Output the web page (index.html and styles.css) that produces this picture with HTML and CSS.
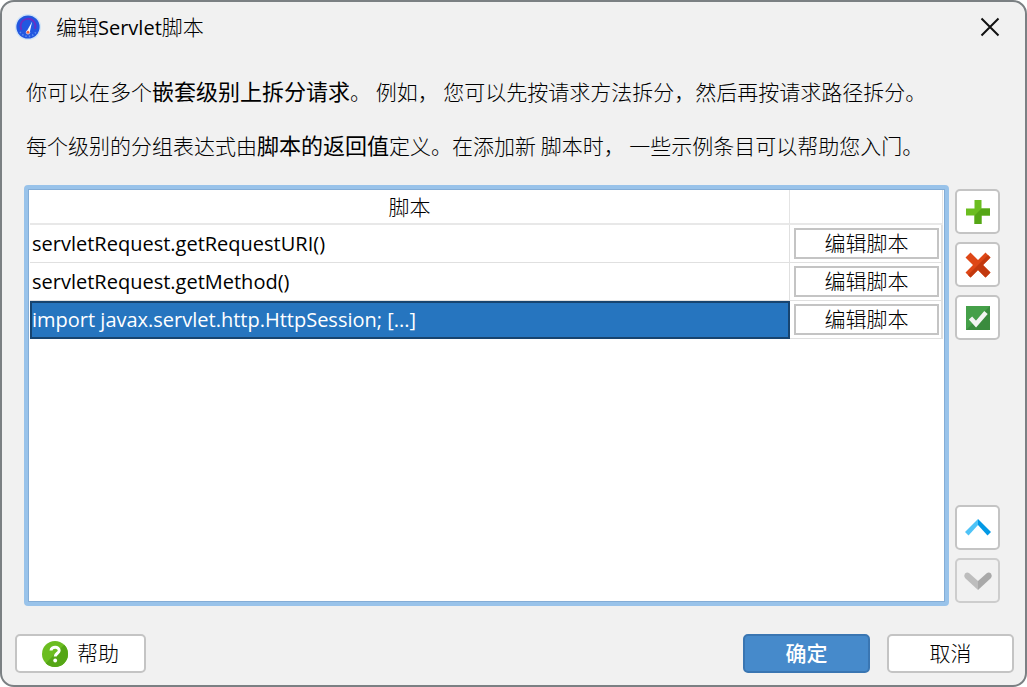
FILE: index.html
```html
<!DOCTYPE html>
<html lang="zh-CN">
<head>
  <meta charset="UTF-8">
  <title>编辑Servlet脚本</title>
  <meta name="viewport" content="width=device-width, initial-scale=1.0">
  <link rel="stylesheet" href="styles.css">
</head>
<body>

  <div class="dialog">
    <header class="titlebar">
      <svg class="app-icon" viewBox="0 0 26 26" aria-hidden="true">
        <circle cx="13" cy="13" r="13" fill="#cfe3f7"/>
        <circle cx="13" cy="13" r="11.6" fill="#2257e0"/>
        <path d="M6.5 16a7.5 7.5 0 1 1 13.5-1" fill="none" stroke="#6a2fc4" stroke-width="1.8"/>
        <path d="M5 18a9.5 9.5 0 0 0 16 0" fill="none" stroke="#5b8df0" stroke-width="1.6" stroke-dasharray="1.4 2"/>
        <path d="M17.2 7.5l-2.6 11.2-3-1.2z" fill="#f4f7ff"/>
        <circle cx="13" cy="18.3" r="1.8" fill="#f2603c" stroke="#fff" stroke-width=".6"/>
      </svg>
      <h1>编辑<span class="latin">Servlet</span>脚本</h1>
      <button class="close-btn" aria-label="关闭">
        <svg viewBox="0 0 20 20"><path d="M1.5 1.5l17 17M18.5 1.5l-17 17" fill="none" stroke="#111" stroke-width="2"/></svg>
      </button>
    </header>

    <div class="intro">
      <p>你可以在多个<b>嵌套级别上拆分请求</b>。 例如， 您可以先按请求方法拆分，然后再按请求路径拆分。</p>
      <p>每个级别的分组表达式由<b>脚本的返回值</b>定义。在添加新 脚本时， 一些示例条目可以帮助您入门。</p>
    </div>

    <main class="content">
      <div class="table-box">
        <table>
          <thead>
            <tr>
              <th>脚本</th>
              <th class="action"></th>
            </tr>
          </thead>
          <tbody>
            <tr>
              <td>servletRequest.getRequestURI()</td>
              <td class="action"><button class="edit-btn">编辑脚本</button></td>
            </tr>
            <tr>
              <td>servletRequest.getMethod()</td>
              <td class="action"><button class="edit-btn">编辑脚本</button></td>
            </tr>
            <tr class="selected">
              <td>import javax.servlet.http.HttpSession; [...]</td>
              <td class="action"><button class="edit-btn">编辑脚本</button></td>
            </tr>
          </tbody>
        </table>
      </div>

      <div class="side">
        <button class="icon-btn" aria-label="添加">
          <svg viewBox="0 0 28 28">
            <path d="M10.5 2h7v8.500h8.500v7h-8.500V26h-7v-8.500H2v-7h8.500z" fill="#6bbd20"/>
            <path d="M26 10.500v7h-8.500V26h-7v-8.500l7-7z" fill="#55a616"/>
          </svg>
        </button>
        <button class="icon-btn" aria-label="删除">
          <svg viewBox="0 0 28 28">
            <path d="M6.500 1.500L14 9l7.500-7.500 5 5L19 14l7.500 7.500-5 5L14 19l-7.500 7.500-5-5L9 14 1.500 6.500z" fill="#de4716"/>
            <path d="M26.500 6.500L19 14l7.500 7.500-5 5L14 19l-7.500 7.500-2.500-2.500L24 4z" fill="#c2390f"/>
          </svg>
        </button>
        <button class="icon-btn" aria-label="检查">
          <svg viewBox="0 0 28 28">
            <path d="M2 2h24v24H2z" fill="#45a049"/>
            <path d="M26 2v24H2z" fill="#3a8b3e"/>
            <path d="M6.500 14l5.500 6L22 8.500" fill="none" stroke="#f2f4f2" stroke-width="4.500"/>
          </svg>
        </button>
        <button class="icon-btn move-up" aria-label="上移">
          <svg viewBox="0 0 28 28">
            <path d="M14 5v6L4.500 21.500 1 18z" fill="#4fc3f7"/>
            <path d="M14 5v6l9.500 10.500L27 18z" fill="#0399e5"/>
          </svg>
        </button>
        <button class="icon-btn" aria-label="下移" disabled>
          <svg viewBox="0 0 28 28">
            <path d="M14 23v-9L5 6Q3 5 1 6.500-.5 9 1 11z" fill="#bdbdbd"/>
            <path d="M14 23v-9l9-8q2-1 4 .5 1.500 2.500 0 4.500z" fill="#a9a9a9"/>
          </svg>
        </button>
      </div>
    </main>

    <footer class="footer">
      <button class="btn help">
        <svg viewBox="0 0 26 26" aria-hidden="true">
          <circle cx="13" cy="13" r="13" fill="#6bbd20"/>
          <path d="M22.200 3.800A13 13 0 0 1 3.800 22.200z" fill="#55a616"/>
          <path d="M9 9.500C9.200 5.200 17.400 5.300 17.200 9.700 17.100 12.200 13.200 12.500 13.200 15.600" fill="none" stroke="#fff" stroke-width="3"/>
          <circle cx="13.200" cy="19.500" r="1.900" fill="#fff"/>
        </svg>
        <span>帮助</span>
      </button>
      <button class="btn primary"><span>确定</span></button>
      <button class="btn"><span>取消</span></button>
    </footer>
  </div>

</body>
</html>
```

FILE: styles.css
```css
* {
  box-sizing: border-box;
}

body {
  margin: 0;
  background-color: #fff;
  color: #000;
  font-family: "Noto Sans CJK SC", sans-serif;
  font-size: 21px;
  font-weight: 300;
}

button {
  font: inherit;
  color: inherit;
  padding: 0;
  cursor: pointer;
}

svg {
  display: block;
  overflow: visible;
}

.dialog {
  display: flex;
  flex-direction: column;
  min-height: 100vh;
  background-color: #f1f1f1;
  border: 2px solid #7b8083;
  border-radius: 14px;
}

.titlebar {
  display: flex;
  align-items: center;
  height: 50px;
  padding: 0 25px 0 13px;
}

.app-icon {
  width: 26px;
  height: 26px;
}

h1 {
  flex: 1;
  margin: 0 0 0 15px;
  padding-bottom: 2px;
  font-size: 21px;
  font-weight: 300;
}

.latin,
td {
  font-family: "Open Sans", "Noto Sans", sans-serif;
  font-size: 20px;
  font-weight: 400;
}

.close-btn {
  border: none;
  background: none;
}

.close-btn svg {
  width: 20px;
  height: 20px;
}

.intro {
  padding: 24px 24px 25px;
}

.intro p {
  margin: 0 0 24px;
  line-height: 30px;
}

.intro p:last-child {
  margin: 0;
}

.intro b {
  font-size: 22px;
  line-height: 1;
}

.content {
  flex: 1;
  display: flex;
  gap: 6px;
  padding: 0 25px 0 22px;
}

.table-box {
  flex: 1;
  background-color: #fff;
  border: 4px solid #99c3ea;
  border-radius: 4px;
  box-shadow: inset 0 0 0 1px #84add6;
  padding: 1px 2px;
}

table {
  width: 100%;
  border-collapse: separate;
  border-spacing: 0;
}

th {
  height: 35px;
  padding: 0 0 2px;
  font-weight: 300;
  line-height: 30px;
  border-right: 1px solid #e4e4e4;
  border-bottom: 2px solid #e8e8e8;
}

td {
  height: 38px;
  padding: 0 2px;
  line-height: 32px;
  border-right: 1px solid #e0e0e0;
  border-bottom: 1px solid #e0e0e0;
}

th.action,
td.action {
  width: 153px;
}

td.action {
  padding: 2px 2px 2px 4px;
  border-right: 2px solid #e0e0e0;
}

.selected td:first-child {
  color: #fff;
  background-color: #2675bf;
  border: 2px solid #17446f;
  padding: 0;
}

.edit-btn {
  display: block;
  width: 100%;
  height: 31px;
  padding-bottom: 3px;
  font-family: "Noto Sans CJK SC", sans-serif;
  font-size: 21px;
  font-weight: 300;
  line-height: 24px;
  background-color: #fff;
  border: 2px solid #c4c4c4;
}

.side {
  display: flex;
  flex-direction: column;
  gap: 8px;
  padding: 4px 0 3px;
}

.icon-btn {
  display: flex;
  align-items: center;
  justify-content: center;
  width: 45px;
  height: 45px;
  background-color: #fff;
  border: 2px solid #c4c4c4;
  border-radius: 5px;
}

.icon-btn svg {
  width: 28px;
  height: 28px;
}

.icon-btn:disabled {
  background-color: #f1f1f1;
  border-color: #cdcdcd;
  cursor: default;
}

.move-up {
  margin-top: auto;
}

.footer {
  display: flex;
  gap: 17px;
  padding: 28px 11px 12px 13px;
}

.btn {
  display: flex;
  align-items: center;
  justify-content: center;
  gap: 9px;
  width: 127px;
  height: 39px;
  background-color: #fff;
  border: 2px solid #c4c4c4;
  border-radius: 5px;
}

.btn span {
  padding-bottom: 3px;
}

.btn svg {
  width: 26px;
  height: 26px;
}

.btn.help {
  width: 131px;
  margin-right: auto;
}

.btn.primary {
  color: #fff;
  font-weight: 500;
  background-color: #468acb;
  border-color: #3a76b2;
}
```
